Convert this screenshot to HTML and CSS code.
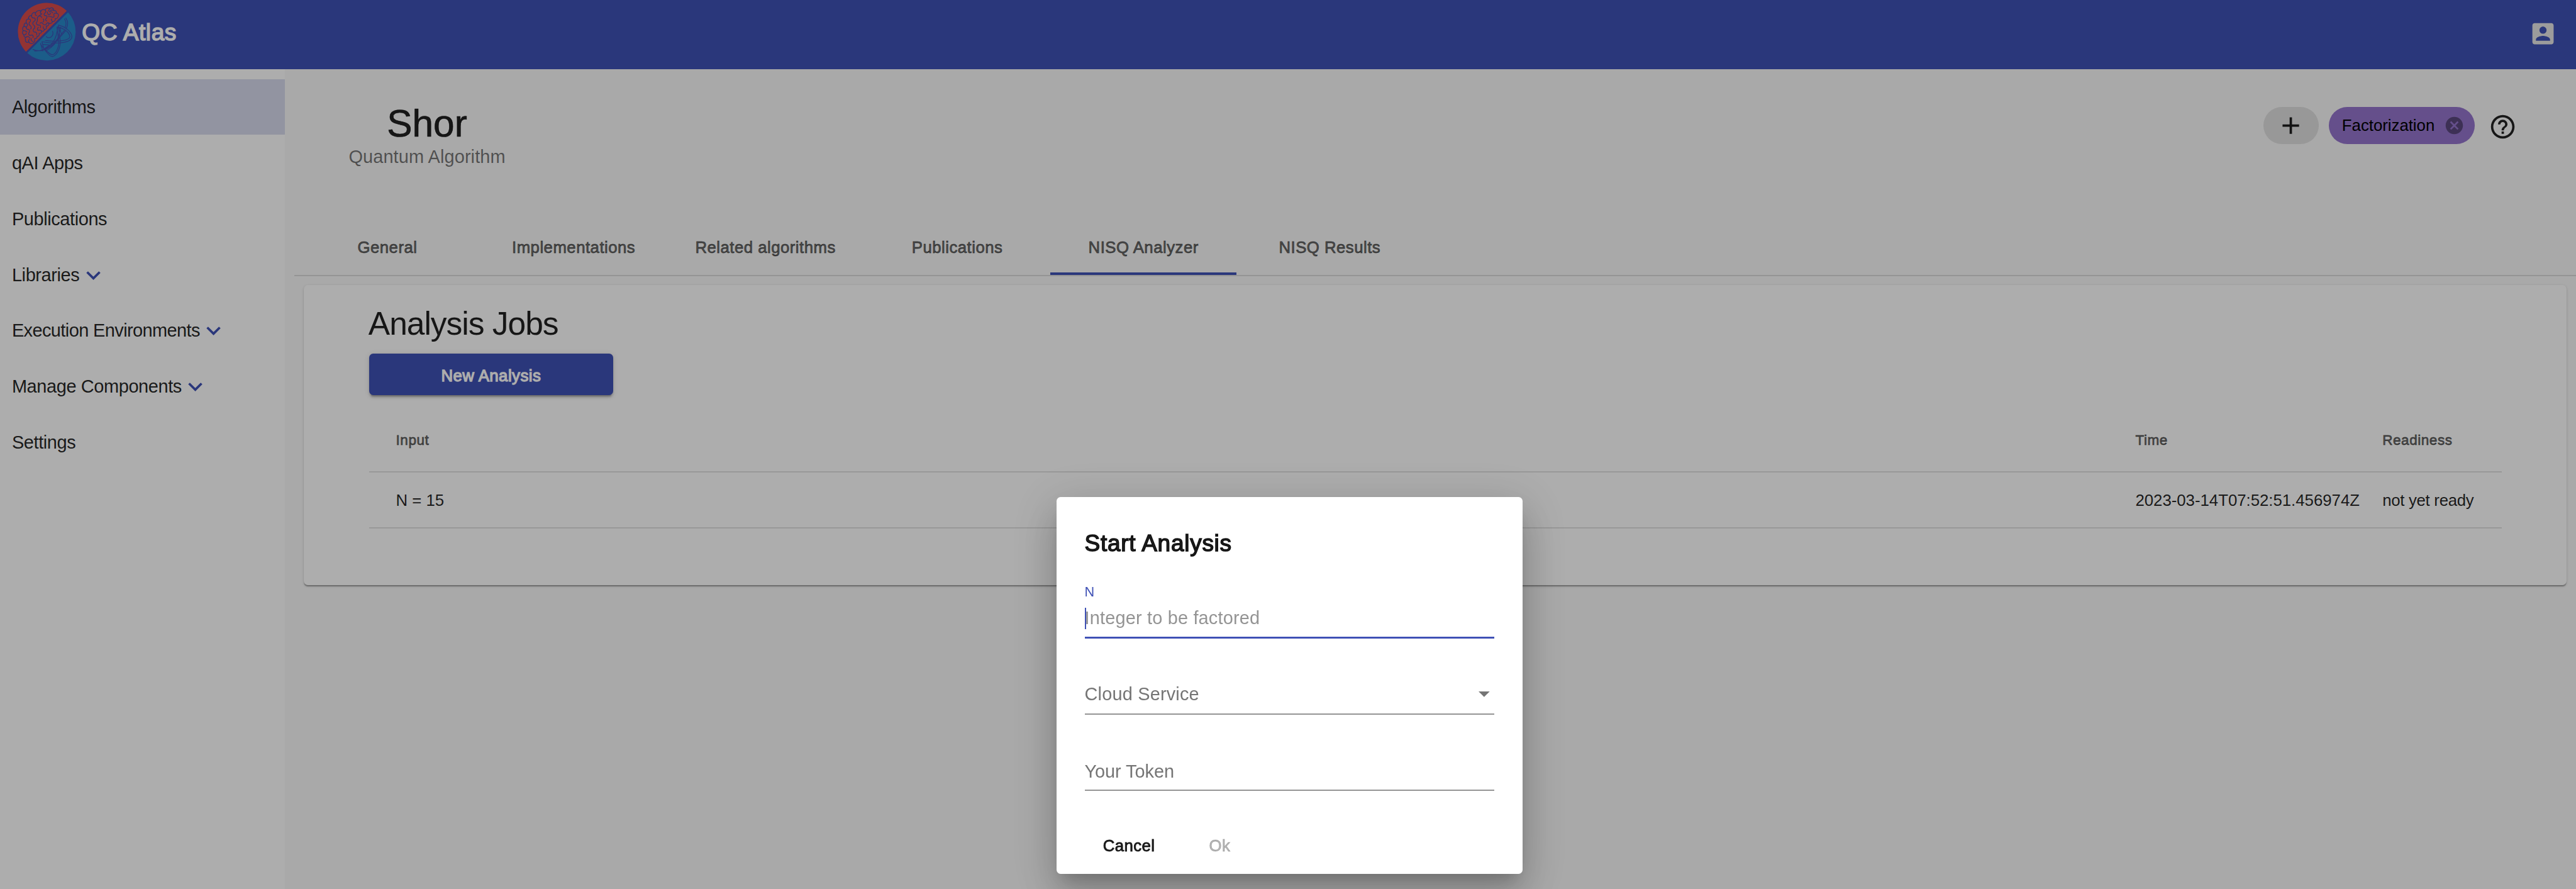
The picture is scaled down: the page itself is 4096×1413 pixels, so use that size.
FILE: index.html
```html
<!DOCTYPE html>
<html lang="en">
<head>
<meta charset="utf-8">
<title>QC Atlas</title>
<link rel="stylesheet" href="styles.css">
</head>
<body>
<div class="app">
  <header class="toolbar">
    <svg class="logo" viewBox="0 0 378 378" aria-hidden="true">
      <path class="logo-red" d="M306.4 64.6A171 171 0 0 0 64.6 306.4Z"/>
      <path class="logo-blue" d="M314 72.4A171 171 0 0 1 72.4 314Z"/>
      <g class="logo-line">
        <path d="M104 257C96 260 84 258 82 248C72 256 58 248 62 235C56 228 62 220 66 220C58 222 50 216 52 206C44 204 40 190 48 182C42 174 44 158 54 156C50 144 58 134 68 138C62 126 66 112 80 112C78 100 86 90 98 92C98 78 112 70 122 76C126 64 144 58 154 66C158 54 172 54 178 60C180 48 198 44 206 52C214 40 230 48 228 62C240 60 248 70 244 78C256 78 262 92 254 100C252 108 244 112 238 110C240 120 232 130 222 126C220 138 210 142 200 138C202 148 194 156 184 154C190 164 184 176 174 174C172 184 164 188 156 184C158 196 150 200 142 198C146 208 140 218 130 214C132 226 124 230 116 228C120 238 116 252 104 257Z"/>
        <path d="M66 220C76 214 86 218 88 228M82 248C76 240 80 234 86 236M52 206C60 208 66 204 66 196M48 182C58 180 64 184 70 190M68 138C74 142 74 150 70 156C62 164 68 176 78 174C88 176 88 188 82 194C76 204 86 214 96 208C106 206 110 216 106 222M80 112C90 112 94 120 90 128C80 134 80 148 90 152C98 158 96 168 92 172M98 92C96 102 104 108 112 106C122 108 122 120 114 126C102 130 102 146 112 150C120 156 118 168 110 172C102 182 110 192 120 190C128 192 130 200 128 206M122 76C116 82 120 92 128 92M154 66C146 72 150 82 158 82C150 94 136 92 134 102C128 112 136 120 130 128C122 136 128 150 138 148C150 148 154 156 150 164M178 60C184 66 182 74 176 78C168 84 172 94 180 92C190 92 192 102 186 108C178 112 180 122 188 124M206 52C196 58 198 66 204 68C212 66 220 70 222 76M228 62C222 58 214 60 210 62M244 78C234 76 228 82 230 90C234 96 230 104 222 102C212 100 206 94 198 98M222 126C214 124 212 116 218 112M200 138C194 132 188 136 186 142C180 150 168 148 166 142C162 134 152 132 148 138M136 98C146 92 156 96 158 104M160 184C152 180 146 176 136 180C130 174 132 166 138 162M190 70C196 78 190 84 200 88C208 86 212 80 208 76M54 156C62 156 66 160 66 166M96 228C92 238 98 246 106 244M166 112C172 116 172 124 166 130M174 174C168 170 164 162 168 158"/>
        <path d="M222 185C230 206 216 226 196 223C190 222 187 219 185 217M293 112C303 129 305 145 297 161M301 107C315 128 315 149 303 171M257 149C300 160 330 185 337 214C339 252 268 265 159 247M251 159C292 170 320 190 325 217C322 241 250 250 180 240M254 163L244 208C236 242 208 276 174 294M270 162L256 218C248 253 225 278 183 302M257 151L268 244C268 284 250 328 222 335C205 338 178 302 151 261M248 161L260 255C256 290 240 322 220 324C205 324 184 298 174 290M301 180L258 230C220 280 160 318 106 293M292 180L246 236C212 276 160 305 115 302M160 250L171 292M151 257L164 302M264 165L276 208M165 263L205 267L174 288"/>
      </g>
    </svg>
    <span class="brand">QC Atlas</span>
    <svg class="icon account" viewBox="0 0 24 24"><path d="M3 5v14c0 1.1.89 2 2 2h14c1.1 0 2-.9 2-2V5c0-1.1-.9-2-2-2H5c-1.11 0-2 .9-2 2zm12 4c0 1.66-1.34 3-3 3s-3-1.34-3-3 1.34-3 3-3 3 1.34 3 3zm-9 8c0-2 4-3.1 6-3.1s6 1.1 6 3.1v1H6v-1z"/></svg>
  </header>
  <div class="body">
    <nav class="sidebar">
      <a class="nav-item active">Algorithms</a>
      <a class="nav-item">qAI Apps</a>
      <a class="nav-item">Publications</a>
      <a class="nav-item">Libraries<svg class="icon" viewBox="0 0 24 24"><path d="M16.59 8.59L12 13.17 7.41 8.59 6 10l6 6 6-6z"/></svg></a>
      <a class="nav-item tight">Execution Environments<svg class="icon" viewBox="0 0 24 24"><path d="M16.59 8.59L12 13.17 7.41 8.59 6 10l6 6 6-6z"/></svg></a>
      <a class="nav-item">Manage Components<svg class="icon" viewBox="0 0 24 24"><path d="M16.59 8.59L12 13.17 7.41 8.59 6 10l6 6 6-6z"/></svg></a>
      <a class="nav-item">Settings</a>
    </nav>
    <main class="content">
      <div class="page-head">
        <div class="titles">
          <h1 class="page-title">Shor</h1>
          <div class="page-subtitle">Quantum Algorithm</div>
        </div>
        <div class="chips">
          <span class="chip chip-add"><svg class="icon" viewBox="0 0 24 24"><path d="M19 13h-6v6h-2v-6H5v-2h6V5h2v6h6v2z"/></svg></span>
          <span class="chip chip-tag">Factorization<svg class="chip-remove" viewBox="0 0 24 24"><path d="M12 2C6.47 2 2 6.47 2 12s4.47 10 10 10 10-4.47 10-10S17.53 2 12 2zm5 13.59L15.59 17 12 13.41 8.41 17 7 15.59 10.59 12 7 8.41 8.41 7 12 10.59 15.59 7 17 8.41 13.41 12 17 15.59z"/></svg></span>
          <svg class="icon help" viewBox="0 0 24 24"><path d="M11 18h2v-2h-2v2zm1-16C6.48 2 2 6.48 2 12s4.48 10 10 10 10-4.48 10-10S17.52 2 12 2zm0 18c-4.41 0-8-3.59-8-8s3.59-8 8-8 8 3.59 8 8-3.59 8-8 8zm0-14c-2.21 0-4 1.79-4 4h2c0-1.1.9-2 2-2s2 .9 2 2c0 2-3 1.75-3 5h2c0-2.25 3-2.5 3-5 0-2.21-1.79-4-4-4z"/></svg>
        </div>
      </div>
      <div class="tabs">
        <div class="tab">General</div>
        <div class="tab">Implementations</div>
        <div class="tab wide">Related algorithms</div>
        <div class="tab">Publications</div>
        <div class="tab selected">NISQ Analyzer</div>
        <div class="tab">NISQ Results</div>
      </div>
      <section class="card">
        <h2 class="card-title">Analysis Jobs</h2>
        <button class="primary-button">New Analysis</button>
        <div class="table">
          <div class="row head"><span>Input</span><span>Time</span><span>Readiness</span></div>
          <div class="row"><span>N = 15</span><span class="time">2023-03-14T07:52:51.456974Z</span><span class="ready">not yet ready</span></div>
        </div>
      </section>
    </main>
  </div>
</div>
<div class="backdrop"></div>
<div class="dialog">
  <h2 class="dialog-title">Start Analysis</h2>
  <div class="field focused">
    <div class="field-label">N</div>
    <div class="field-text">Integer to be factored</div>
  </div>
  <div class="field select">
    <div class="field-text">Cloud Service</div>
    <svg class="arrow" viewBox="0 0 10 5"><path d="M0 0h10L5 5z"/></svg>
  </div>
  <div class="field token">
    <div class="field-text">Your Token</div>
  </div>
  <div class="actions">
    <span class="action">Cancel</span>
    <span class="action disabled">Ok</span>
  </div>
</div>
</body>
</html>
```
FILE: styles.css
```css
html {
  font-size: 8.0472px;
}

* {
  box-sizing: border-box;
}

body {
  margin: 0;
  overflow: hidden;
  background: #fafafa;
  color: rgba(0, 0, 0, 0.87);
  font-family: "Liberation Sans", Arial, sans-serif;
  font-size: 3.2rem;
}

h1,
h2 {
  margin: 0;
  font-weight: 400;
}

.app {
  display: flex;
  flex-direction: column;
  height: 100vh;
}

.icon {
  width: 5.6rem;
  height: 5.6rem;
  flex: none;
  fill: currentColor;
}

/* Toolbar */
.toolbar {
  display: flex;
  align-items: center;
  flex: none;
  height: 13.7rem;
  padding: 0 3.7rem 1rem 3rem;
  background: #3f51b5;
  color: #fff;
}

.logo {
  width: 12.6rem;
  height: 12.6rem;
}

.logo-red {
  fill: #d94c4c;
}

.logo-blue {
  fill: #288acb;
}

.logo-line {
  fill: none;
  stroke: #3f51b5;
  stroke-width: 4.6;
  stroke-linecap: round;
  stroke-linejoin: round;
}

.brand {
  margin-left: 0.6rem;
  padding-top: 0.1rem;
  font-size: 4.6rem;
  letter-spacing: 0.07rem;
  -webkit-text-stroke: 0.19rem;
}

.account {
  margin: 0.5rem 0 0 auto;
  color: #e6e6e6;
}

/* Sidebar */
.body {
  display: flex;
  flex: 1;
  min-height: 0;
}

.sidebar {
  display: flex;
  flex-direction: column;
  flex: none;
  width: 56.3rem;
  padding-top: 1.9rem;
  background: #fff;
}

.nav-item {
  display: flex;
  align-items: center;
  height: 11.03rem;
  padding: 0.25rem 0 0 2.35rem;
  font-size: 3.6rem;
  letter-spacing: -0.05rem;
}

.nav-item.active {
  background: #d8daed;
}

.nav-item.tight {
  letter-spacing: -0.075rem;
}

.nav-item .icon {
  margin-left: -0.1rem;
  color: #3f51b5;
}

/* Page heading */
.content {
  flex: 1;
  min-width: 0;
}

.page-head {
  display: flex;
  justify-content: space-between;
  align-items: flex-start;
  height: 30.8rem;
  padding: 6.2rem 11.7rem 0 12.6rem;
}

.titles {
  text-align: center;
}

.page-title {
  font-size: 7.5rem;
  line-height: 9rem;
  -webkit-text-stroke: 0.08rem;
}

.page-subtitle {
  color: rgba(0, 0, 0, 0.54);
  font-size: 3.6rem;
  line-height: 4.1rem;
  letter-spacing: 0.01rem;
}

.chips {
  display: flex;
  align-items: center;
  margin-top: 1.2rem;
}

.chip {
  display: flex;
  align-items: center;
  height: 7.3rem;
  border-radius: 3.65rem;
}

.chip-add {
  justify-content: center;
  width: 11rem;
  margin-right: 1.9rem;
  background: #e0e0e0;
}

.chip-tag {
  justify-content: space-between;
  width: 28.9rem;
  margin-right: 2.7rem;
  padding: 0 1.95rem 0 2.65rem;
  background: #9575cd;
  color: #000;
}

.chip-remove {
  width: 4.1rem;
  height: 4.1rem;
  fill: #000;
  opacity: 0.38;
}

.help {
  margin-top: 0.5rem;
}

/* Tabs */
.tabs {
  display: flex;
  height: 10rem;
  margin-left: 1.85rem;
  border-bottom: 2px solid rgba(0, 0, 0, 0.12);
}

.tab {
  display: flex;
  align-items: center;
  justify-content: center;
  width: 36.8rem;
  padding-bottom: 0.4rem;
  border-bottom: 0.5rem solid transparent;
  color: rgba(0, 0, 0, 0.53);
  letter-spacing: 0.06rem;
  -webkit-text-stroke: 0.12rem;
}

.tab.wide {
  width: 39rem;
}

.tab.selected {
  border-bottom-color: #3f51b5;
}

/* Analysis card */
.card {
  height: 59.3rem;
  margin: 1.8rem 1.9rem 0 3.7rem;
  padding: 4.1rem 12.8rem 0 12.9rem;
  border-radius: 0.8rem;
  background: #fff;
  box-shadow: 0 0.4rem 0.2rem -0.2rem rgba(0, 0, 0, 0.2), 0 0.2rem 0.2rem rgba(0, 0, 0, 0.14), 0 0.2rem 0.6rem rgba(0, 0, 0, 0.12);
}

.card-title {
  margin-left: -0.1rem;
  font-size: 6.4rem;
  line-height: 7.2rem;
  letter-spacing: -0.125rem;
}

.primary-button {
  display: block;
  width: 48.3rem;
  height: 8.2rem;
  margin-top: 2.3rem;
  padding: 0.4rem 0 0;
  border: 0;
  border-radius: 0.8rem;
  background: #3f51b5;
  box-shadow: 0 0.6rem 0.2rem -0.4rem rgba(0, 0, 0, 0.2), 0 0.4rem 0.4rem rgba(0, 0, 0, 0.14), 0 0.2rem 1rem rgba(0, 0, 0, 0.12);
  color: #fff;
  font: inherit;
  letter-spacing: 0.06rem;
  -webkit-text-stroke: 0.16rem;
}

.table {
  margin-top: 2.6rem;
}

.row {
  display: grid;
  grid-template-columns: 1fr 48.8rem 23.56rem;
  align-items: center;
  height: 11.15rem;
  padding: 0.25rem 0 0 5.33rem;
  border-bottom: 2px solid rgba(0, 0, 0, 0.12);
}

.row.head {
  height: 12.6rem;
  color: rgba(0, 0, 0, 0.54);
  font-size: 2.8rem;
  letter-spacing: 0.07rem;
  -webkit-text-stroke: 0.11rem;
}

.ready {
  letter-spacing: -0.035rem;
}

/* Dialog */
.backdrop {
  position: fixed;
  inset: 0;
  background: rgba(0, 0, 0, 0.32);
}

.dialog {
  position: fixed;
  top: 98.2rem;
  left: 208.8rem;
  width: 92rem;
  height: 74.4rem;
  padding: 6.1rem 5.5rem 0;
  border-radius: 0.8rem;
  background: #fff;
  box-shadow: 0 2.2rem 3rem -1.4rem rgba(0, 0, 0, 0.2), 0 4.8rem 7.6rem 0.6rem rgba(0, 0, 0, 0.14), 0 1.8rem 9.2rem 1.6rem rgba(0, 0, 0, 0.12);
}

.dialog-title {
  font-size: 4.6rem;
  line-height: 6rem;
  letter-spacing: 0.09rem;
  -webkit-text-stroke: 0.19rem;
}

.field {
  border-bottom: 2px solid #949494;
  color: #757575;
  font-size: 3.6rem;
  line-height: 4.2rem;
  letter-spacing: 0.02rem;
}

.field.focused {
  margin-top: 5.1rem;
  padding-bottom: 1.4rem;
  border-bottom: 0.4rem solid #3f51b5;
  color: #949494;
}

.field-label {
  margin-bottom: 1.7rem;
  color: #3f51b5;
  font-size: 2.7rem;
  line-height: 3rem;
}

.focused .field-text {
  position: relative;
}

.focused .field-text::before {
  content: "";
  position: absolute;
  left: 0;
  width: 2px;
  height: 100%;
  background: #3f51b5;
}

.field.select {
  display: flex;
  justify-content: space-between;
  align-items: center;
  margin-top: 9rem;
  padding: 0 0.9rem 1.6rem 0;
}

.arrow {
  width: 2.2rem;
  height: 1.1rem;
  fill: #757575;
}

.field.token {
  margin-top: 9.2rem;
  padding-bottom: 1.4rem;
  letter-spacing: -0.01rem;
}

.actions {
  display: flex;
  gap: 10.7rem;
  margin-top: 8.8rem;
  padding-left: 3.65rem;
  line-height: 4rem;
  letter-spacing: 0.05rem;
  -webkit-text-stroke: 0.11rem;
}

.action.disabled {
  color: rgba(0, 0, 0, 0.26);
}
```
